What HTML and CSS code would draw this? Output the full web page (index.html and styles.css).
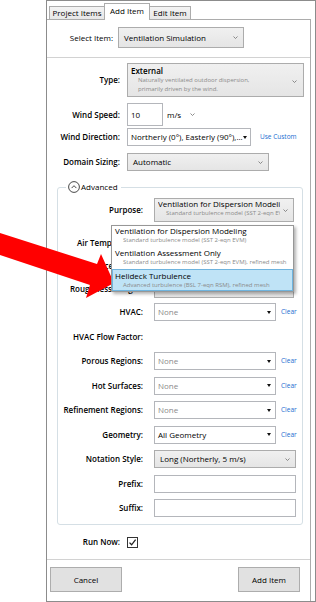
FILE: index.html
```html
<!DOCTYPE html>
<html lang="en">
  <head>
    <meta charset="UTF-8" />
    <meta name="viewport" content="width=device-width, initial-scale=1.0" />
    <title>Add Item</title>
    <link rel="stylesheet" href="styles.css">
  </head>
  <body>
    <div class="window">
      <div class="tabs">
        <div class="tab tab-project">Project Items</div>
        <div class="tab tab-add tab-active">Add Item</div>
        <div class="tab tab-edit">Edit Item</div>
      </div>
      <div class="panel">
        <div class="row row-select">
          <div class="label label-select">Select Item:</div>
          <div class="combo combo-select">
            <span>Ventilation Simulation</span>
            <svg class="chev" width="5" height="3" viewBox="0 0 5 3"><path d="M0.5 0.5L2.5 2.5L4.5 0.5" /></svg>
          </div>
        </div>
        <div class="sep"></div>
        <div class="row row-type">
          <div class="label">Type:</div>
          <div class="combo combo-type">
            <div class="combo-text">
              <div class="main">External</div>
              <div class="sub">Naturally ventilated outdoor dispersion,<br>primarily driven by the wind.</div>
            </div>
            <svg class="chev" width="5" height="3" viewBox="0 0 5 3"><path d="M0.5 0.5L2.5 2.5L4.5 0.5" /></svg>
          </div>
        </div>
        <div class="row row-speed">
          <div class="label">Wind Speed:</div>
          <div class="input input-speed">10</div>
          <span class="unit">m/s</span>
          <svg class="chev unit-chev" width="5" height="3" viewBox="0 0 5 3"><path d="M0.5 0.5L2.5 2.5L4.5 0.5" /></svg>
        </div>
        <div class="row row-dir">
          <div class="label">Wind Direction:</div>
          <div class="combo combo-edit combo-dir">
            <span>Northerly (0°), Easterly (90°),...</span>
            <svg class="tri" width="4" height="3" viewBox="0 0 4 3"><path d="M0 0H4L2 3Z" /></svg>
          </div>
          <span class="link link-custom">Use Custom</span>
        </div>
        <div class="row row-domain">
          <div class="label">Domain Sizing:</div>
          <div class="combo combo-domain">
            <span>Automatic</span>
            <svg class="chev" width="5" height="3" viewBox="0 0 5 3"><path d="M0.5 0.5L2.5 2.5L4.5 0.5" /></svg>
          </div>
        </div>

        <fieldset class="group">
          <legend class="group-title">
            <svg class="toggle" width="12" height="12" viewBox="0 0 12 12"><circle cx="6" cy="6" r="5.4" /><path d="M3.6 7.1L6 4.7L8.4 7.1" /></svg>
            <span>Advanced</span>
          </legend>

          <div class="grow grow-purpose">
            <div class="glabel">Purpose:</div>
            <div class="field">
              <div class="combo combo-purpose">
                <div class="combo-text">
                  <div class="main">Ventilation for Dispersion Modeling</div>
                  <div class="sub">Standard turbulence model (SST 2-eqn EVM)</div>
                </div>
                <svg class="chev" width="5" height="3" viewBox="0 0 5 3"><path d="M0.5 0.5L2.5 2.5L4.5 0.5" /></svg>
              </div>
              <div class="popup">
                <div class="opt opt-first">
                  <div class="main">Ventilation for Dispersion Modeling</div>
                  <div class="sub">Standard turbulence model (SST 2-eqn EVM)</div>
                </div>
                <div class="opt opt-second">
                  <div class="main">Ventilation Assessment Only</div>
                  <div class="sub">Standard turbulence model (SST 2-eqn EVM), refined mesh</div>
                </div>
                <div class="opt opt-hover">
                  <div class="main">Helideck Turbulence</div>
                  <div class="sub">Advanced turbulence (BSL 7-eqn RSM), refined mesh</div>
                </div>
              </div>
            </div>
          </div>
          <div class="grow grow-short">
            <div class="glabel">Air Temperature:</div>
            <div class="combo combo-wide"></div>
          </div>
          <div class="grow grow-short">
            <div class="glabel">Reference Height:</div>
            <div class="combo combo-wide"></div>
          </div>
          <div class="grow grow-short">
            <div class="glabel">Roughness Length:</div>
            <div class="combo combo-wide"></div>
          </div>
          <div class="grow">
            <div class="glabel">HVAC:</div>
            <div class="combo combo-edit combo-list">
              <span class="none">None</span>
              <svg class="tri" width="4" height="3" viewBox="0 0 4 3"><path d="M0 0H4L2 3Z" /></svg>
            </div>
            <span class="link">Clear</span>
          </div>
          <div class="grow">
            <div class="glabel">HVAC Flow Factor:</div>
          </div>
          <div class="grow">
            <div class="glabel">Porous Regions:</div>
            <div class="combo combo-edit combo-list">
              <span class="none">None</span>
              <svg class="tri" width="4" height="3" viewBox="0 0 4 3"><path d="M0 0H4L2 3Z" /></svg>
            </div>
            <span class="link">Clear</span>
          </div>
          <div class="grow">
            <div class="glabel">Hot Surfaces:</div>
            <div class="combo combo-edit combo-list">
              <span class="none">None</span>
              <svg class="tri" width="4" height="3" viewBox="0 0 4 3"><path d="M0 0H4L2 3Z" /></svg>
            </div>
            <span class="link">Clear</span>
          </div>
          <div class="grow">
            <div class="glabel">Refinement Regions:</div>
            <div class="combo combo-edit combo-list">
              <span class="none">None</span>
              <svg class="tri" width="4" height="3" viewBox="0 0 4 3"><path d="M0 0H4L2 3Z" /></svg>
            </div>
            <span class="link">Clear</span>
          </div>
          <div class="grow">
            <div class="glabel">Geometry:</div>
            <div class="combo combo-edit combo-list">
              <span>All Geometry</span>
              <svg class="tri" width="4" height="3" viewBox="0 0 4 3"><path d="M0 0H4L2 3Z" /></svg>
            </div>
            <span class="link">Clear</span>
          </div>
          <div class="grow">
            <div class="glabel">Notation Style:</div>
            <div class="combo combo-notation">
              <span>Long (Northerly, 5 m/s)</span>
              <svg class="chev" width="5" height="3" viewBox="0 0 5 3"><path d="M0.5 0.5L2.5 2.5L4.5 0.5" /></svg>
            </div>
          </div>
          <div class="grow">
            <div class="glabel">Prefix:</div>
            <div class="input input-text"></div>
          </div>
          <div class="grow">
            <div class="glabel">Suffix:</div>
            <div class="input input-text"></div>
          </div>
        </fieldset>

        <div class="row row-run">
          <div class="label">Run Now:</div>
          <div class="check">
            <svg width="9" height="9" viewBox="0 0 9 9"><path d="M1.5 4.6L3.6 6.8L7.6 1.6" /></svg>
          </div>
        </div>
        <div class="sep sep-bottom"></div>
        <div class="buttons">
          <div class="btn btn-cancel">Cancel</div>
          <div class="btn btn-add">Add Item</div>
        </div>
      </div>
    </div>

    <svg class="arrow" width="316" height="602" viewBox="0 0 316 602">
      <polygon points="0,233 97,264 101,254 114,283 86,298 90,285 0,255" />
    </svg>
  </body>
</html>
```

FILE: styles.css
```css
body {
  margin: 0;
  background: #fff;
  font-family: "Open Sans", sans-serif;
  font-size: 8px;
  line-height: 10px;
  color: #000;
}

.window {
  margin-left: 46px;
  width: 268px;
  height: 600px;
  border: 1px solid #8c8c8c;
  background: #fff;
}

/* tabs */
.tabs {
  display: flex;
  align-items: flex-end;
  height: 18px;
  padding-left: 2px;
}
.tab {
  box-sizing: border-box;
  height: 13px;
  margin-right: -1px;
  border: 1px solid #acacac;
  border-bottom: none;
  background: linear-gradient(#f3f3f3, #e7e7e7);
  text-align: center;
  line-height: 12px;
}
.tab-project { width: 56px; }
.tab-add { width: 46px; }
.tab-edit { width: 42px; }
.tab-active {
  position: relative;
  z-index: 1;
  height: 17px;
  margin-bottom: -1px;
  background: #fff;
  line-height: 13px;
}

.panel {
  box-sizing: border-box;
  width: 264px;
  height: 582px;
  border-top: 1px solid #acacac;
  border-right: 1px solid #acacac;
}

.sep {
  height: 1px;
  margin-top: 9px;
  background: #d2d2d2;
}

/* top rows */
.row {
  display: flex;
  align-items: center;
}
.label {
  width: 73px;
  margin-right: 7px;
  text-align: right;
  font-weight: 600;
  white-space: nowrap;
}
.label-select {
  width: 66px;
  margin-right: 5px;
  font-weight: 400;
}
.row-select { padding-top: 7px; }
.row-type { margin-top: 5px; }
.row-speed { margin-top: 6px; }
.row-dir { margin-top: 2px; }
.row-domain { margin-top: 7px; }

.combo {
  box-sizing: border-box;
  display: flex;
  align-items: center;
  justify-content: space-between;
  height: 18px;
  padding: 0 5px 0 5px;
  border: 1px solid #acacac;
  background: linear-gradient(#f0f0f0, #e5e5e5);
  white-space: nowrap;
  overflow: hidden;
}
.combo-edit {
  padding: 0 4px 0 3px;
  border-color: #b4b6bb;
  background: #fff;
}
.combo-select { width: 126px; height: 21px; }
.combo-type {
  align-items: flex-start;
  width: 177px;
  height: 34px;
  padding: 2px 6px 0 3px;
}
.combo-type .chev { margin-top: 14px; }
.combo-dir { width: 124px; }
.combo-domain { width: 142px; }
.combo-purpose {
  align-items: flex-start;
  width: 140px;
  height: 24px;
  padding: 0 5px 0 3px;
}
.combo-purpose .combo-text { overflow: hidden; width: 122px; }
.combo-purpose .chev { margin-top: 10px; }
.combo-wide { width: 140px; }
.combo-list { width: 122px; }
.combo-notation { width: 142px; }

.main {
  line-height: 10px;
  white-space: nowrap;
}
.combo-text .main { font-weight: 600; }
.combo-purpose .combo-text .main { font-weight: 400; }
.sub {
  padding-left: 7px;
  font-size: 6px;
  line-height: 9px;
  color: #8a8a8a;
  white-space: nowrap;
}
.combo-purpose .sub { padding-left: 8px; line-height: 9px; }

.chev {
  flex: none;
  fill: none;
  stroke: #707070;
  stroke-width: 0.8;
}
.tri {
  flex: none;
  fill: #111;
}
.none { color: #8a8a8a; }

.input {
  box-sizing: border-box;
  height: 18px;
  padding-left: 3px;
  border: 1px solid #b4b6bb;
  background: #fff;
  line-height: 16px;
}
.input-speed {
  width: 36px;
  height: 23px;
  line-height: 21px;
}
.input-text { width: 142px; }
.unit { margin-left: 4px; }
.unit-chev { margin-left: 9px; }

.link {
  margin-left: 5px;
  font-size: 6.5px;
  color: #1a6dd0;
}
.link-custom { margin-left: 9px; }

/* advanced group */
.group {
  width: 244px;
  margin: 9px 0 0 10px;
  padding: 2px 0 3.5px 0;
  border: 1px solid #d5dfe5;
  border-radius: 3px;
  min-width: 0;
}
.group-title {
  display: flex;
  align-items: center;
  height: 14px;
  margin-left: 8px;
  padding: 0 3px 0 2px;
}
.toggle {
  margin-right: 1px;
  fill: none;
  stroke: #333;
  stroke-width: 0.9;
}

.grow {
  display: flex;
  align-items: center;
  height: 24.5px;
}
.grow-purpose {
  height: 28px;
  margin-bottom: 7px;
}
.grow-short { height: 23px; }
.glabel {
  width: 85px;
  margin-right: 11px;
  text-align: right;
  font-weight: 600;
  white-space: nowrap;
}
.field {
  position: relative;
}

/* open drop-down list */
.popup {
  position: absolute;
  top: 27px;
  right: 0;
  z-index: 2;
  box-sizing: border-box;
  width: 183px;
  border: 1px solid #979797;
  background: #fff;
  box-shadow: 2px 2px 3px rgba(0, 0, 0, 0.3);
}
.opt {
  box-sizing: border-box;
  height: 22px;
  padding-left: 3px;
}
.opt .sub { padding-left: 8px; }
.opt-second { height: 21px; }
.opt-hover {
  padding-top: 1px;
  padding-left: 2px;
  border: 1px solid #6fb4de;
  background: #bfe3f6;
}

/* bottom */
.row-run {
  height: 16px;
  margin-top: 9px;
}
.check {
  box-sizing: border-box;
  width: 11px;
  height: 11px;
  padding: 0;
  border: 1px solid #333;
  background: #fff;
}
.check svg {
  display: block;
  fill: none;
  stroke: #222;
  stroke-width: 1.3;
}
.buttons {
  display: flex;
  justify-content: space-between;
  margin-top: 7px;
  padding: 0 10px 0 3px;
}
.btn {
  box-sizing: border-box;
  height: 25px;
  border: 1px solid #adadad;
  background: #e1e1e1;
  text-align: center;
  line-height: 23px;
}
.btn-cancel { width: 72px; }
.btn-add { width: 62px; }

/* annotation drawn over the screenshot */
.arrow {
  position: absolute;
  top: 0;
  left: 0;
  pointer-events: none;
}
.arrow polygon { fill: #ff0000; }
```
